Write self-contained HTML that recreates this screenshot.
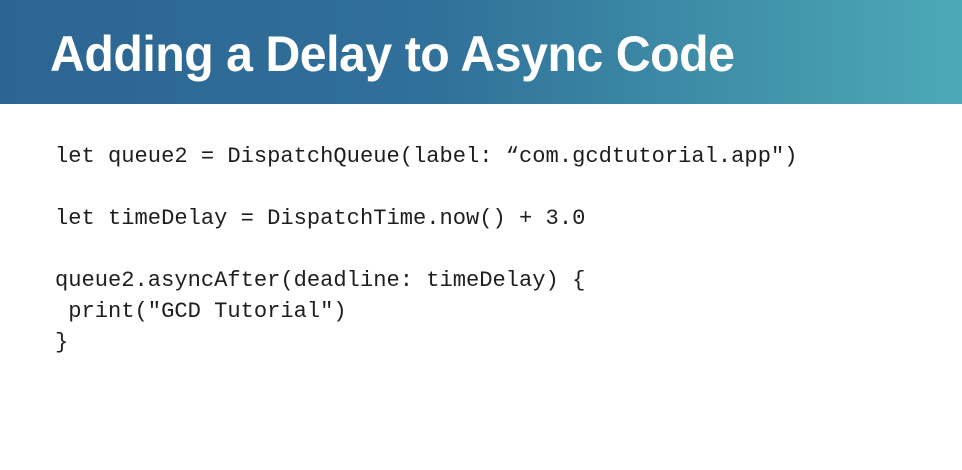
<!DOCTYPE html>
<html><head><style>
html,body{margin:0;padding:0;width:962px;height:470px;overflow:hidden;background:#fff}
.hdr{position:absolute;left:0;top:0;width:962px;height:104px;background:linear-gradient(90deg,#2c6592 0%,#30709a 45%,#3f8fa8 75%,#4ca9b7 100%)}
.t{position:absolute;left:50px;top:24px;color:#fff;font:bold 50px/60px "Liberation Sans",sans-serif;transform:scaleX(0.965);transform-origin:left top;white-space:nowrap;letter-spacing:-0.5px}
pre{position:absolute;left:55px;top:141px;margin:0;font:22.1px/31px "Liberation Mono",monospace;color:#1e1e1e}
</style></head><body>
<div class="hdr"><div class="t">Adding a Delay to Async Code</div></div>
<pre>let queue2 = DispatchQueue(label: “com.gcdtutorial.app")

let timeDelay = DispatchTime.now() + 3.0

queue2.asyncAfter(deadline: timeDelay) {
 print("GCD Tutorial")
}</pre>
</body></html>
